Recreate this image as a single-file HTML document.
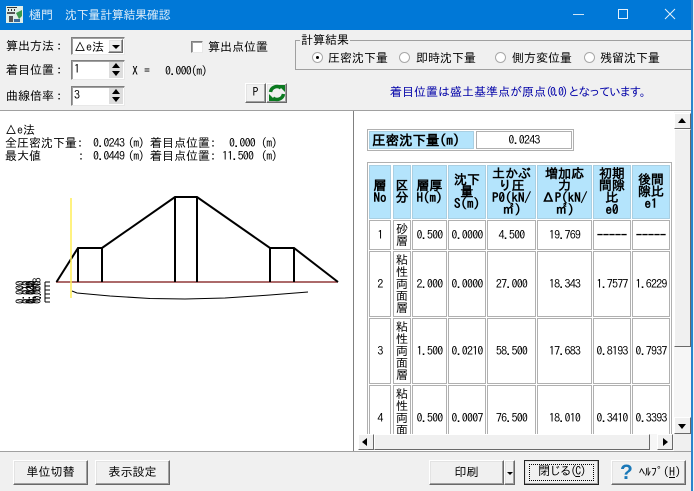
<!DOCTYPE html>
<html lang="ja"><head><meta charset="utf-8"><style>
html,body{margin:0;padding:0}
body{width:694px;height:491px;overflow:hidden;position:relative;background:#f0f0f0;font:12px "IPAGothic","Liberation Sans","Noto Sans CJK JP",sans-serif;color:#000}
.a{position:absolute;white-space:nowrap}
.n{letter-spacing:-.8px}
.btn{position:absolute;box-sizing:border-box;background:#f0f0f0;border:1px solid;border-color:#fff #696969 #696969 #fff;box-shadow:inset -1px -1px 0 #a0a0a0,inset 1px 1px 0 #e3e3e3;text-align:center;white-space:nowrap}
.sunk{position:absolute;box-sizing:border-box;background:#fff;border:1px solid;border-color:#808080 #e8e8e8 #e8e8e8 #808080;box-shadow:inset 1px 1px 0 #a0a0a0}
.c{position:absolute;box-sizing:border-box;background:#fff;border:1px solid #b0b0b0;display:flex;align-items:center;justify-content:center;text-align:center;font-size:12px;line-height:12px;letter-spacing:-.8px;overflow:hidden}
.h{background:#b4e4fc;font-weight:bold;font-size:13px;line-height:12px;border-color:#a9cfe2;letter-spacing:0}
.v{letter-spacing:0}
.r{position:absolute;box-sizing:border-box;width:11px;height:11px;border-radius:50%;background:#fff;border:1px solid #a8a8a8;top:52px}
.sb{position:absolute;box-sizing:border-box;background:#f0f0f0;border:1px solid;border-color:#fff #696969 #696969 #fff}
.t{position:absolute;width:0;height:0}
</style></head><body>
<div class="a" style="left:0;top:0;width:692px;height:30px;background:#0078d7"></div>
<div class="a" style="left:691px;top:0;width:1.5px;height:491px;background:#2a84cc"></div>
<svg class="a" style="left:6px;top:6px" width="17" height="17" viewBox="0 0 17 17"><rect width="17" height="17" fill="#dfeee8"/><path d="M1 1h10v1H1zM2 3h1v2H2zM5 3h1v2H5zM8 3h1v2H8z" fill="#333"/><path d="M1 6h8v2H1zM3 10h4v6H3z" fill="#555"/><path d="M10 7l6-3v6l-3 3z" fill="#3a9a4c"/><path d="M8 13h6v3H8z" fill="#3a6a9a"/></svg>
<div class="a" style="left:29px;top:3px;font-size:12px;line-height:24px;color:#dcecf8">樋門　<span style="letter-spacing:-.3px">沈下量計算結果確認</span></div>
<div class="a" style="left:573px;top:14px;width:11px;height:1px;background:#cfe4f5"></div>
<div class="a" style="left:618px;top:9px;width:10px;height:10px;box-sizing:border-box;border:1px solid #e6f1fa"></div>
<svg class="a" style="left:664px;top:8px" width="12" height="12"><path d="M1 1l10 10M11 1L1 11" stroke="#e6f1fa" fill="none"/></svg>

<div class="a" style="left:6px;top:39px;line-height:14px">算出方法<span style="margin-left:-1px">：</span></div>
<div class="a" style="left:6px;top:63px;line-height:14px">着目位置<span style="margin-left:-1px">：</span></div>
<div class="a" style="left:6px;top:89px;line-height:14px">曲線倍率<span style="margin-left:-1px">：</span></div>
<div class="sunk" style="left:71px;top:37px;width:54px;height:18px"></div>
<div class="a" style="left:74px;top:40px;line-height:14px">△e法</div>
<div class="btn" style="left:108px;top:39px;width:15px;height:14px"></div>
<div class="t" style="left:112px;top:45px;border:4px solid transparent;border-top:4px solid #000;border-bottom:0"></div>
<div class="sunk" style="left:71px;top:60px;width:54px;height:20px"></div>
<div class="a" style="left:74px;top:62px;line-height:14px">1</div>
<div class="sunk" style="left:71px;top:86px;width:54px;height:20px"></div>
<div class="a" style="left:74px;top:88px;line-height:14px">3</div>
<div class="a" style="left:109px;top:62px;width:14px;height:16px;background:#ddd"></div>
<div class="t" style="left:112px;top:63px;border:4px solid transparent;border-bottom:5px solid #000;border-top:0"></div>
<div class="t" style="left:112px;top:71px;border:4px solid transparent;border-top:5px solid #000;border-bottom:0"></div>
<div class="a" style="left:109px;top:88px;width:14px;height:16px;background:#ddd"></div>
<div class="t" style="left:112px;top:89px;border:4px solid transparent;border-bottom:5px solid #000;border-top:0"></div>
<div class="t" style="left:112px;top:97px;border:4px solid transparent;border-top:5px solid #000;border-bottom:0"></div>
<div class="a" style="left:132px;top:65px;line-height:12px">X =</div>
<div class="a n" style="left:165px;top:65px;line-height:12px">0.000(m)</div>
<div class="sunk" style="left:191px;top:41px;width:12px;height:12px"></div>
<div class="a" style="left:208px;top:40px;line-height:14px">算出点位置</div>
<div class="btn" style="left:245px;top:83px;width:21px;height:20px;line-height:17px">P</div>
<div class="btn" style="left:266px;top:83px;width:21px;height:20px"></div>
<svg class="a" style="left:268px;top:84px" width="18" height="18" viewBox="0 0 18 18"><path d="M2.500 8A6.500 6.500 0 0 1 13 4" stroke="#0b7a20" stroke-width="3.500" fill="none"/><path d="M10 1h7v7z" fill="#0b7a20"/><path d="M15.500 10A6.500 6.500 0 0 1 5 14" stroke="#0b7a20" stroke-width="3.500" fill="none"/><path d="M8 17H1v-7z" fill="#0b7a20"/></svg>

<div class="a" style="left:295px;top:40px;width:396px;height:30px;box-sizing:border-box;border:1px solid #a0a0a0;border-right:0"></div>
<div class="a" style="left:300px;top:33px;background:#f0f0f0;padding:0 1px;line-height:14px">計算結果</div>
<div class="r" style="left:312px"></div>
<div class="a" style="left:316px;top:56px;width:3px;height:3px;border-radius:50%;background:#000"></div>
<div class="a" style="left:328px;top:51px;line-height:14px">圧密沈下量</div>
<div class="r" style="left:399px"></div>
<div class="a" style="left:416px;top:51px;line-height:14px">即時沈下量</div>
<div class="r" style="left:495px"></div>
<div class="a" style="left:512px;top:51px;line-height:14px">側方変位量</div>
<div class="r" style="left:584px"></div>
<div class="a" style="left:600px;top:51px;line-height:14px">残留沈下量</div>
<div class="a" style="left:390px;top:85px;line-height:14px;color:#0000a8">着目位置は盛土基準点が原点<span style="letter-spacing:-2px">(0.0)</span><span style="letter-spacing:-1.750px;margin-left:2px">となっています。</span></div>

<div class="a" style="left:0;top:110px;width:691px;height:1px;background:#a0a0a0"></div>
<div class="a" style="left:0;top:111px;width:353px;height:340px;background:#fff"></div>
<div class="a" style="left:353px;top:111px;width:1px;height:340px;background:#808080"></div>
<div class="a" style="left:354px;top:111px;width:337px;height:340px;background:#fff"></div>
<div class="a" style="left:0;top:451px;width:691px;height:1px;background:#a0a0a0"></div>

<div class="a" style="left:5px;top:124px;line-height:12px">△e法</div>
<div class="a" style="left:5px;top:137px;line-height:12px">全圧密沈下量:</div>
<div class="a n" style="left:93px;top:137px;line-height:12px">0.0243</div>
<div class="a n" style="left:128px;top:137px;line-height:12px">(m)</div>
<div class="a" style="left:150px;top:137px;line-height:12px">着目点位置:</div>
<div class="a n" style="left:229px;top:137px;line-height:12px">0.000</div>
<div class="a n" style="left:261px;top:137px;line-height:12px">(m)</div>
<div class="a" style="left:5px;top:150px;line-height:12px">最大値</div>
<div class="a" style="left:78px;top:150px;line-height:12px">:</div>
<div class="a n" style="left:93px;top:150px;line-height:12px">0.0449</div>
<div class="a n" style="left:128px;top:150px;line-height:12px">(m)</div>
<div class="a" style="left:150px;top:150px;line-height:12px">着目点位置:</div>
<div class="a n" style="left:222px;top:150px;line-height:12px">11.500</div>
<div class="a n" style="left:261px;top:150px;line-height:12px">(m)</div>

<svg class="a" style="left:0;top:111px" width="353" height="340" viewBox="0 111 353 340">
<path d="M56 282H338" stroke="#7a1010" stroke-width="1.300"/>
<path d="M56.500 282L78 248H102L175 197H197L270 248H294L338 282M78 248V282M102 248V282M175 197V282M197 197V282M270 248V282M294 248V282" stroke="#000" stroke-width="2" fill="none"/>
<path d="M71 198V298" stroke="#ffee55" stroke-width="1.500"/>
<path d="M72 291L77 293L110 296L150 298.500L185 299L225 298L270 295L308 292" stroke="#000" fill="none"/>
<path d="M45 282h5M45 286h5M45 290h5M45 294h5M45 298h5M45 302h5M45 302V282" stroke="#000" fill="none"/>
<g font-size="11" letter-spacing="-1" font-family="IPAGothic,Liberation Sans,sans-serif">
<text transform="translate(24,304) rotate(-90)">0.000</text>
<text transform="translate(30,304) rotate(-90)">0.010</text>
<text transform="translate(34,304) rotate(-90)">0.020</text>
<text transform="translate(35,304) rotate(-90)">0.030</text>
<text transform="translate(36,304) rotate(-90)">0.040</text>
<text transform="translate(41,304) rotate(-90)">0.050</text>
<text transform="translate(41,301) rotate(-90)">0.018</text>
</g></svg>

<div class="a" style="left:367px;top:129px;width:207px;height:22px;box-sizing:border-box;border:1px solid #b0b0b0"></div>
<div class="c h" style="left:369px;top:131px;width:105px;height:18px;justify-content:flex-start;padding-left:2px;font-size:13.500px">圧密沈下量(m)</div>
<div class="c" style="left:476px;top:131px;width:96px;height:18px">0.0243</div>

<div class="a" style="left:367px;top:162px;width:305px;height:272px;box-sizing:border-box;border:1px solid #b0b0b0;border-bottom:0"></div>
<div class="c h" style="left:369px;top:165px;width:22px;height:54px">層<br>No</div>
<div class="c h" style="left:393px;top:165px;width:18px;height:54px">区<br>分</div>
<div class="c h" style="left:412px;top:165px;width:35px;height:54px">層厚<br>H(m)</div>
<div class="c h" style="left:448px;top:165px;width:38px;height:54px">沈下<br>量<br>S(m)</div>
<div class="c h" style="left:487px;top:165px;width:49px;height:54px">土かぶ<br>り圧<br>P0(kN/<br>㎡)</div>
<div class="c h" style="left:537px;top:165px;width:55px;height:54px">増加応<br>力<br>ΔP(kN/<br>㎡)</div>
<div class="c h" style="left:593px;top:165px;width:38px;height:54px">初期<br>間隙<br>比<br>e0</div>
<div class="c h" style="left:632px;top:165px;width:38px;height:54px">後間<br>隙比<br>e1</div>

<div class="c" style="left:369px;top:220px;width:22px;height:30px">1</div>
<div class="c v" style="left:393px;top:220px;width:18px;height:30px">砂<br>層</div>
<div class="c" style="left:412px;top:220px;width:35px;height:30px">0.500</div>
<div class="c" style="left:448px;top:220px;width:38px;height:30px">0.0000</div>
<div class="c" style="left:487px;top:220px;width:49px;height:30px">4.500</div>
<div class="c" style="left:537px;top:220px;width:55px;height:30px">19.769</div>
<div class="c v" style="left:593px;top:220px;width:38px;height:30px;font-weight:bold">-----</div>
<div class="c v" style="left:632px;top:220px;width:38px;height:30px;font-weight:bold">-----</div>

<div class="c" style="left:369px;top:251px;width:22px;height:66px">2</div>
<div class="c v" style="left:393px;top:251px;width:18px;height:66px">粘<br>性<br>両<br>面<br>層</div>
<div class="c" style="left:412px;top:251px;width:35px;height:66px">2.000</div>
<div class="c" style="left:448px;top:251px;width:38px;height:66px">0.0000</div>
<div class="c" style="left:487px;top:251px;width:49px;height:66px">27.000</div>
<div class="c" style="left:537px;top:251px;width:55px;height:66px">18.343</div>
<div class="c" style="left:593px;top:251px;width:38px;height:66px">1.7577</div>
<div class="c" style="left:632px;top:251px;width:38px;height:66px">1.6229</div>

<div class="c" style="left:369px;top:318px;width:22px;height:66px">3</div>
<div class="c v" style="left:393px;top:318px;width:18px;height:66px">粘<br>性<br>両<br>面<br>層</div>
<div class="c" style="left:412px;top:318px;width:35px;height:66px">1.500</div>
<div class="c" style="left:448px;top:318px;width:38px;height:66px">0.0210</div>
<div class="c" style="left:487px;top:318px;width:49px;height:66px">58.500</div>
<div class="c" style="left:537px;top:318px;width:55px;height:66px">17.683</div>
<div class="c" style="left:593px;top:318px;width:38px;height:66px">0.8193</div>
<div class="c" style="left:632px;top:318px;width:38px;height:66px">0.7937</div>

<div class="c" style="left:369px;top:385px;width:22px;height:66px">4</div>
<div class="c v" style="left:393px;top:385px;width:18px;height:66px">粘<br>性<br>両<br>面<br>層</div>
<div class="c" style="left:412px;top:385px;width:35px;height:66px">0.500</div>
<div class="c" style="left:448px;top:385px;width:38px;height:66px">0.0007</div>
<div class="c" style="left:487px;top:385px;width:49px;height:66px">76.500</div>
<div class="c" style="left:537px;top:385px;width:55px;height:66px">18.010</div>
<div class="c" style="left:593px;top:385px;width:38px;height:66px">0.3410</div>
<div class="c" style="left:632px;top:385px;width:38px;height:66px">0.3393</div>

<div class="a" style="left:354px;top:434px;width:337px;height:17px;background:#fff"></div>
<div class="a" style="left:358px;top:434px;width:316px;height:16px;background:#f6f6f6"></div>
<div class="a" style="left:674px;top:434px;width:17px;height:17px;background:#f0f0f0"></div>
<div class="sb" style="left:358px;top:434px;width:16px;height:16px"></div>
<div class="t" style="left:362px;top:438px;border:4px solid transparent;border-right:5px solid #000;border-left:0"></div>
<div class="sb" style="left:374px;top:434px;width:276px;height:16px"></div>
<div class="sb" style="left:657px;top:434px;width:16px;height:16px"></div>
<div class="t" style="left:663px;top:438px;border:4px solid transparent;border-left:5px solid #000;border-right:0"></div>
<div class="a" style="left:674px;top:112px;width:17px;height:322px;background:#f6f6f6"></div>
<div class="sb" style="left:674px;top:113px;width:17px;height:16px"></div>
<div class="t" style="left:678px;top:118px;border:4px solid transparent;border-bottom:5px solid #000;border-top:0"></div>
<div class="sb" style="left:674px;top:129px;width:17px;height:218px"></div>
<div class="sb" style="left:674px;top:417px;width:17px;height:17px"></div>
<div class="t" style="left:678px;top:424px;border:4px solid transparent;border-top:5px solid #000;border-bottom:0"></div>

<div class="btn" style="left:13px;top:460px;width:75px;height:25px;line-height:22px">単位切替</div>
<div class="btn" style="left:95px;top:460px;width:75px;height:25px;line-height:22px">表示設定</div>
<div class="btn" style="left:429px;top:460px;width:75px;height:25px;line-height:22px">印刷</div>
<div class="btn" style="left:504px;top:460px;width:11px;height:25px"></div>
<div class="t" style="left:507px;top:472px;border:3px solid transparent;border-top:3px solid #000;border-bottom:0"></div>
<div class="btn" style="left:524px;top:460px;width:75px;height:25px;line-height:21px;letter-spacing:-1.200px;outline:1px solid #222;outline-offset:-1px"><span style="position:absolute;left:4px;top:3px;right:4px;bottom:3px;border:1px dotted #000"></span>閉じる(<u>C</u>)</div>
<div class="btn" style="left:611px;top:460px;width:75px;height:25px"></div>
<div class="a" style="left:620px;top:461px;font:bold 21px/23px 'Liberation Sans',sans-serif;color:#1a78b8">?</div>
<div class="a" style="left:639px;top:465px;line-height:14px">ﾍﾙﾌﾟ(<u>H</u>)</div>
</body></html>
